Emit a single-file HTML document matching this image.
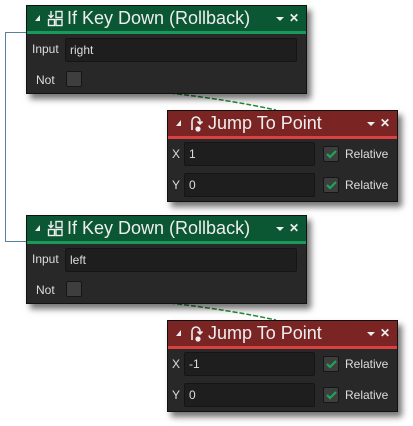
<!DOCTYPE html>
<html><head><style>
body{margin:0;width:413px;height:426px;background:#fff;position:relative;overflow:hidden;font-family:"Liberation Sans",sans-serif;}
.p{position:absolute;background:#282828;border:1px solid #111;box-shadow:4px 5px 6px rgba(0,0,0,0.55);}
.h{position:absolute;left:0;right:0;top:0;height:25px;color:#eee;font-size:18px;line-height:25px;}
.g .h{background:#0b5633;border-bottom:3px solid #1a9a5a;}
.r .h{background:#7a2424;border-bottom:3px solid #d94040;}
.h .t{position:absolute;left:8px;top:9px;width:0;height:0;border-left:5px solid transparent;border-bottom:6px solid #eee;}
.h .ic{position:absolute;left:20px;top:4px;}
.h .tx{position:absolute;left:40px;top:0;}
.h .dd{position:absolute;right:22px;top:11px;width:0;height:0;border-left:4px solid transparent;border-right:4px solid transparent;border-top:4px solid #eee;}
.h .x{position:absolute;right:7px;top:0;font-size:12px;font-weight:bold;}
.lb{position:absolute;color:#ddd;font-size:12px;}
.in{position:absolute;background:#1e1e1e;border:1px solid #151515;border-radius:2px;color:#ddd;font-size:12px;line-height:22px;padding-left:4px;box-sizing:border-box;}
.cb{position:absolute;width:16px;height:16px;background:#3e3e3e;border:1px solid #161616;border-radius:2px;box-sizing:border-box;}
</style></head><body>
<svg style="position:absolute;left:0;top:0" width="413" height="426">
<path d="M26 32.5H5.5V241.5H26" fill="none" stroke="#5c7f9b" stroke-width="1"/>
<path d="M170 93 Q230 100 276 110" fill="none" stroke="#2a8a3a" stroke-width="1.5" stroke-dasharray="5 2"/>
<path d="M170 303 Q230 310 276 320" fill="none" stroke="#2a8a3a" stroke-width="1.5" stroke-dasharray="5 2"/>
</svg>

<div class="p g" style="left:26px;top:5px;width:279px;height:87px;">
 <div class="h"><span class="t"></span>
 <svg class="ic" width="17" height="17" viewBox="0 0 17 17" fill="none" stroke="#eee" stroke-width="1.4"><path d="M4 1v6M1.5 5l2.5 2.5L6.5 5"/><rect x="9" y="1.5" width="6" height="6"/><rect x="1.5" y="9.5" width="6" height="6"/><rect x="9" y="9.5" width="6" height="6"/></svg>
 <span class="tx">If Key Down (Rollback)</span><span class="dd"></span><span class="x">✕</span></div>
 <span class="lb" style="left:5px;top:36px;">Input</span>
 <div class="in" style="left:38px;top:32px;width:232px;height:24px;">right</div>
 <span class="lb" style="left:9px;top:67px;">Not</span>
 <div class="cb" style="left:39px;top:65px;"></div>
</div>

<div class="p r" style="left:167px;top:110px;width:229px;height:90px;">
 <div class="h"><span class="t"></span>
 <svg class="ic" width="17" height="18" viewBox="0 0 17 18" fill="none" stroke="#eee" stroke-width="1.6"><path d="M4 15V6a4 4 0 0 1 8 0v2"/><path d="M9.5 6.5l2.5 2.5 2.5-2.5"/><circle cx="10" cy="14" r="1.8" fill="#eee"/></svg>
 <span class="tx">Jump To Point</span><span class="dd"></span><span class="x">✕</span></div>
 <span class="lb" style="left:4px;top:36px;">X</span>
 <div class="in" style="left:16px;top:31px;width:131px;height:24px;">1</div>
 <div class="cb" style="left:155px;top:35px;"><svg width="14" height="14" style="position:absolute;left:0;top:0"><path d="M3 7l3 3 6-6" stroke="#1fa55a" stroke-width="2.2" fill="none"/></svg></div>
 <span class="lb" style="left:177px;top:36px;">Relative</span>
 <span class="lb" style="left:4px;top:67px;">Y</span>
 <div class="in" style="left:16px;top:62px;width:131px;height:24px;">0</div>
 <div class="cb" style="left:155px;top:66px;"><svg width="14" height="14" style="position:absolute;left:0;top:0"><path d="M3 7l3 3 6-6" stroke="#1fa55a" stroke-width="2.2" fill="none"/></svg></div>
 <span class="lb" style="left:177px;top:67px;">Relative</span>
</div>

<div class="p g" style="left:26px;top:215px;width:279px;height:87px;">
 <div class="h"><span class="t"></span>
 <svg class="ic" width="17" height="17" viewBox="0 0 17 17" fill="none" stroke="#eee" stroke-width="1.4"><path d="M4 1v6M1.5 5l2.5 2.5L6.5 5"/><rect x="9" y="1.5" width="6" height="6"/><rect x="1.5" y="9.5" width="6" height="6"/><rect x="9" y="9.5" width="6" height="6"/></svg>
 <span class="tx">If Key Down (Rollback)</span><span class="dd"></span><span class="x">✕</span></div>
 <span class="lb" style="left:5px;top:36px;">Input</span>
 <div class="in" style="left:38px;top:32px;width:232px;height:24px;">left</div>
 <span class="lb" style="left:9px;top:67px;">Not</span>
 <div class="cb" style="left:39px;top:65px;"></div>
</div>

<div class="p r" style="left:167px;top:320px;width:229px;height:90px;">
 <div class="h"><span class="t"></span>
 <svg class="ic" width="17" height="18" viewBox="0 0 17 18" fill="none" stroke="#eee" stroke-width="1.6"><path d="M4 15V6a4 4 0 0 1 8 0v2"/><path d="M9.5 6.5l2.5 2.5 2.5-2.5"/><circle cx="10" cy="14" r="1.8" fill="#eee"/></svg>
 <span class="tx">Jump To Point</span><span class="dd"></span><span class="x">✕</span></div>
 <span class="lb" style="left:4px;top:36px;">X</span>
 <div class="in" style="left:16px;top:31px;width:131px;height:24px;">-1</div>
 <div class="cb" style="left:155px;top:35px;"><svg width="14" height="14" style="position:absolute;left:0;top:0"><path d="M3 7l3 3 6-6" stroke="#1fa55a" stroke-width="2.2" fill="none"/></svg></div>
 <span class="lb" style="left:177px;top:36px;">Relative</span>
 <span class="lb" style="left:4px;top:67px;">Y</span>
 <div class="in" style="left:16px;top:62px;width:131px;height:24px;">0</div>
 <div class="cb" style="left:155px;top:66px;"><svg width="14" height="14" style="position:absolute;left:0;top:0"><path d="M3 7l3 3 6-6" stroke="#1fa55a" stroke-width="2.2" fill="none"/></svg></div>
 <span class="lb" style="left:177px;top:67px;">Relative</span>
</div>
</body></html>
